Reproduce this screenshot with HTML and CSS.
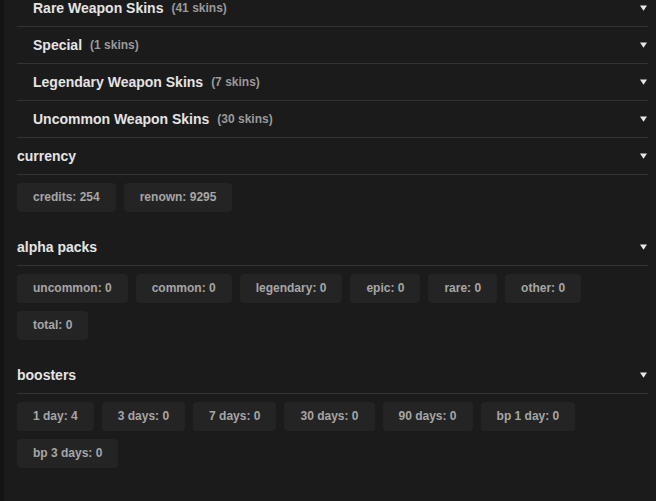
FILE: index.html
```html
<!DOCTYPE html>
<html>
<head>
<meta charset="utf-8">
<link rel="stylesheet" href="styles.css">
</head>
<body>
<div class="strip"></div>
<main class="content">
  <div class="group">
    <div class="row sub"><span class="title">Rare Weapon Skins</span><span class="count">(41 skins)</span><svg class="caret" viewBox="0 0 8 6"><polygon points="0,0 8,0 4,6"/></svg></div>
    <div class="row sub"><span class="title">Special</span><span class="count">(1 skins)</span><svg class="caret" viewBox="0 0 8 6"><polygon points="0,0 8,0 4,6"/></svg></div>
    <div class="row sub"><span class="title">Legendary Weapon Skins</span><span class="count">(7 skins)</span><svg class="caret" viewBox="0 0 8 6"><polygon points="0,0 8,0 4,6"/></svg></div>
    <div class="row sub"><span class="title">Uncommon Weapon Skins</span><span class="count">(30 skins)</span><svg class="caret" viewBox="0 0 8 6"><polygon points="0,0 8,0 4,6"/></svg></div>
  </div>

  <section class="section">
    <div class="row head"><span class="title">currency</span><svg class="caret" viewBox="0 0 8 6"><polygon points="0,0 8,0 4,6"/></svg></div>
    <div class="chips">
      <span class="chip">credits: 254</span>
      <span class="chip">renown: 9295</span>
    </div>
  </section>

  <section class="section">
    <div class="row head"><span class="title">alpha packs</span><svg class="caret" viewBox="0 0 8 6"><polygon points="0,0 8,0 4,6"/></svg></div>
    <div class="chips">
      <span class="chip">uncommon: 0</span>
      <span class="chip">common: 0</span>
      <span class="chip">legendary: 0</span>
      <span class="chip">epic: 0</span>
      <span class="chip">rare: 0</span>
      <span class="chip">other: 0</span>
      <span class="chip">total: 0</span>
    </div>
  </section>

  <section class="section">
    <div class="row head"><span class="title">boosters</span><svg class="caret" viewBox="0 0 8 6"><polygon points="0,0 8,0 4,6"/></svg></div>
    <div class="chips">
      <span class="chip">1 day: 4</span>
      <span class="chip">3 days: 0</span>
      <span class="chip">7 days: 0</span>
      <span class="chip">30 days: 0</span>
      <span class="chip">90 days: 0</span>
      <span class="chip">bp 1 day: 0</span>
      <span class="chip">bp 3 days: 0</span>
    </div>
  </section>
</main>
</body>
</html>
```

FILE: styles.css
```css
html, body {
  margin: 0;
  padding: 0;
  height: 100%;
  overflow: hidden;
}
body {
  display: flex;
  background: #1b1b1b;
  font-family: "Liberation Sans", Arial, sans-serif;
  color: #e2e2e2;
}
.strip {
  width: 4px;
  flex: none;
  background: #141414;
}
.content {
  flex: 1;
  padding: 0 8px 0 13px;
  margin-top: -10px;
}
.row {
  display: flex;
  align-items: center;
  height: 36px;
  border-bottom: 1px solid #333333;
}
.row.sub {
  padding-left: 16px;
}
.title {
  font-size: 14px;
  font-weight: bold;
  color: #e4e4e4;
}
.count {
  margin-left: 8px;
  font-size: 12px;
  font-weight: bold;
  color: #9a9a9a;
}
.caret {
  margin-left: auto;
  margin-right: 1px;
  width: 7px;
  height: 6px;
  fill: #e6e6e6;
}
.section {
  margin-bottom: 17px;
}
.chips {
  display: flex;
  flex-wrap: wrap;
  gap: 8px 8px;
  padding-top: 8px;
}
.chip {
  display: inline-block;
  padding: 7px 16px;
  line-height: 15px;
  font-size: 12px;
  font-weight: bold;
  color: #a6a6a6;
  background: #242424;
  border-radius: 4px;
}
```
